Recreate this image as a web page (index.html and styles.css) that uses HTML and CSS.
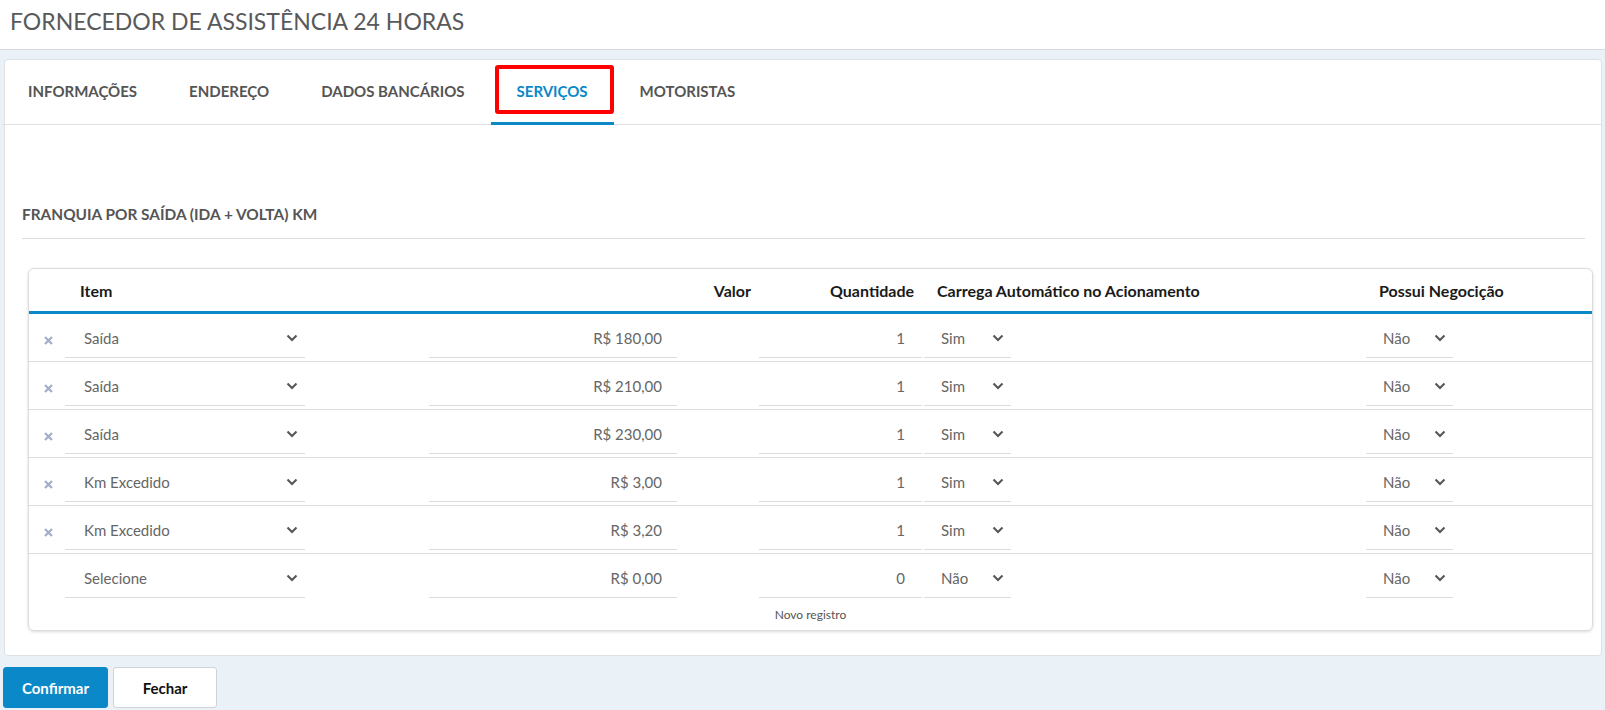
FILE: index.html
```html
<!DOCTYPE html>
<html lang="pt-BR">
<head>
  <meta charset="UTF-8">
  <title>Fornecedor de Assistência 24 Horas</title>
  <link rel="stylesheet" href="styles.css">
</head>
<body>
  <header class="page-header">
    <h1>FORNECEDOR DE ASSISTÊNCIA 24 HORAS</h1>
  </header>

  <main class="page">
    <div class="card">
      <ul class="tabs">
        <li class="tab">INFORMAÇÕES</li>
        <li class="tab">ENDEREÇO</li>
        <li class="tab">DADOS BANCÁRIOS</li>
        <li class="tab active">SERVIÇOS</li>
        <li class="tab">MOTORISTAS</li>
      </ul>

      <div class="card-body">
        <h2 class="section-title">FRANQUIA POR SAÍDA (IDA + VOLTA) KM</h2>

        <div class="grid-box">
          <table class="grid">
            <colgroup>
              <col style="width:36px">
              <col style="width:364px">
              <col style="width:330px">
              <col style="width:165px">
              <col style="width:442px">
              <col>
            </colgroup>
            <thead>
              <tr>
                <th></th>
                <th class="th-item">Item</th>
                <th class="th-right">Valor</th>
                <th class="th-right th-qtd">Quantidade</th>
                <th>Carrega Automático no Acionamento</th>
                <th>Possui Negocição</th>
              </tr>
            </thead>
            <tbody id="rows"></tbody>
          </table>
          <div class="grid-footer">Novo registro</div>
        </div>
      </div>
    </div>

    <div class="actions">
      <button class="btn btn-primary">Confirmar</button>
      <button class="btn">Fechar</button>
    </div>
  </main>

  <script>
    const rows = [
      { item: 'Saída', valor: 'R$ 180,00', qtd: '1', carrega: 'Sim', neg: 'Não', del: true },
      { item: 'Saída', valor: 'R$ 210,00', qtd: '1', carrega: 'Sim', neg: 'Não', del: true },
      { item: 'Saída', valor: 'R$ 230,00', qtd: '1', carrega: 'Sim', neg: 'Não', del: true },
      { item: 'Km Excedido', valor: 'R$ 3,00', qtd: '1', carrega: 'Sim', neg: 'Não', del: true },
      { item: 'Km Excedido', valor: 'R$ 3,20', qtd: '1', carrega: 'Sim', neg: 'Não', del: true },
      { item: 'Selecione', valor: 'R$ 0,00', qtd: '0', carrega: 'Não', neg: 'Não', del: false }
    ];

    const chevron = '<svg class="chev" width="12" height="8" viewBox="0 0 12 8"><polyline points="1.5,1.5 6,6 10.5,1.5" fill="none" stroke="#555" stroke-width="2"/></svg>';
    const remove = '<svg class="remove" width="9" height="9" viewBox="0 0 9 9"><path d="M1 1L8 8M8 1L1 8" stroke="#a3aecb" stroke-width="2.2"/></svg>';

    function select(text, cls) {
      return `<div class="select ${cls}"><span>${text}</span>${chevron}</div>`;
    }

    document.getElementById('rows').innerHTML = rows.map(r => `
      <tr>
        <td class="td-del">${r.del ? remove : ''}</td>
        <td>${select(r.item, 'select-item')}</td>
        <td><input class="field field-valor" value="${r.valor}"></td>
        <td><input class="field field-qtd" value="${r.qtd}"></td>
        <td>${select(r.carrega, 'select-small')}</td>
        <td>${select(r.neg, 'select-small')}</td>
      </tr>`).join('');
  </script>
</body>
</html>
```

FILE: styles.css
```css
body {
  margin: 0;
  background-color: #eaf2f8;
  font-family: Lato, "Open Sans", sans-serif;
  color: #555;
}

.page-header {
  box-sizing: border-box;
  background: #fff;
  height: 50px;
  border-bottom: 1px solid #d6dce1;
  padding: 0 0 7px 10px;
  display: flex;
  align-items: center;
}

.page-header h1 {
  margin: 0;
  font-size: 23px;
  font-weight: 400;
  color: #58595b;
}

.page {
  padding: 9px 3px 0 4px;
}

.card {
  background: #fff;
  border: 1px solid #dde1e4;
  border-radius: 4px;
}

.tabs {
  list-style: none;
  margin: 0 0 0 -3px;
  padding: 0;
  display: flex;
  height: 64px;
  border-bottom: 1px solid #dde1e4;
}

.tab {
  position: relative;
  display: flex;
  align-items: center;
  padding: 0 26px;
  margin-bottom: -1px;
  font-size: 15px;
  font-weight: 700;
  color: #555;
  border-bottom: 3px solid transparent;
}

.tab.active {
  color: #0a88c8;
  border-bottom-color: #0a88c8;
}

.tab.active::after {
  content: "";
  position: absolute;
  top: 5px;
  left: 4px;
  right: 0;
  bottom: 8px;
  border: 4px solid #f00;
  border-radius: 3px;
}

.card-body {
  padding: 79px 16px 24px 17px;
}

.section-title {
  margin: 0;
  padding-bottom: 14px;
  border-bottom: 1px solid #dcdcdc;
  font-size: 15.4px;
  line-height: 20px;
  font-weight: 700;
  color: #555;
}

.grid-box {
  margin: 29px -8px 0 6px;
  border: 1px solid #dcdcdc;
  border-radius: 6px;
  box-shadow: 0 1px 3px rgba(0, 0, 0, 0.15);
}

.grid {
  width: 100%;
  border-collapse: collapse;
  table-layout: fixed;
}

.grid th {
  height: 42px;
  padding: 0 13px;
  text-align: left;
  font-size: 16px;
  font-weight: 700;
  color: #1a1a1a;
  border-bottom: 3px solid #0a88c8;
  white-space: nowrap;
}

.grid th.th-item {
  padding-left: 15px;
}

.grid th.th-right {
  text-align: right;
  padding-right: 8px;
}

.grid th.th-qtd {
  padding-right: 10px;
}

.grid td {
  padding: 4px 0 3px;
  border-bottom: 1px solid #dcdcdc;
}

.grid tbody tr:last-child td {
  border-bottom: none;
}

.td-del {
  text-align: center;
}

.remove {
  display: inline-block;
  vertical-align: middle;
  margin-left: 3px;
}

.select {
  box-sizing: border-box;
  display: flex;
  align-items: center;
  justify-content: space-between;
  height: 40px;
  border-bottom: 1px solid #dcdcdc;
  padding: 0 7px 0 19px;
  font-size: 15px;
  color: #666;
}

.select-item {
  width: 240px;
}

.select-small {
  width: 87px;
  padding-left: 17px;
}

.field {
  display: block;
  box-sizing: border-box;
  height: 40px;
  border: none;
  border-bottom: 1px solid #dcdcdc;
  outline: none;
  text-align: right;
  font-family: inherit;
  font-size: 15px;
  color: #666;
  background: transparent;
}

.field-valor {
  width: 248px;
  padding: 0 15px 0 0;
}

.field-qtd {
  width: 163px;
  padding: 0 17px 0 0;
}

.grid-footer {
  padding: 6px 0 7px;
  line-height: 16px;
  text-align: center;
  font-size: 12px;
  color: #555;
}

.actions {
  display: flex;
  gap: 5px;
  margin: 11px 0 0 -1px;
}

.btn {
  height: 41px;
  width: 104px;
  border: 1px solid #cfd4d8;
  border-radius: 3px;
  background: #fff;
  font-family: inherit;
  font-size: 15px;
  font-weight: 700;
  color: #111;
  cursor: pointer;
}

.btn-primary {
  width: 105px;
  background: #0a88c8;
  border-color: #0a88c8;
  color: #fff;
}
```
